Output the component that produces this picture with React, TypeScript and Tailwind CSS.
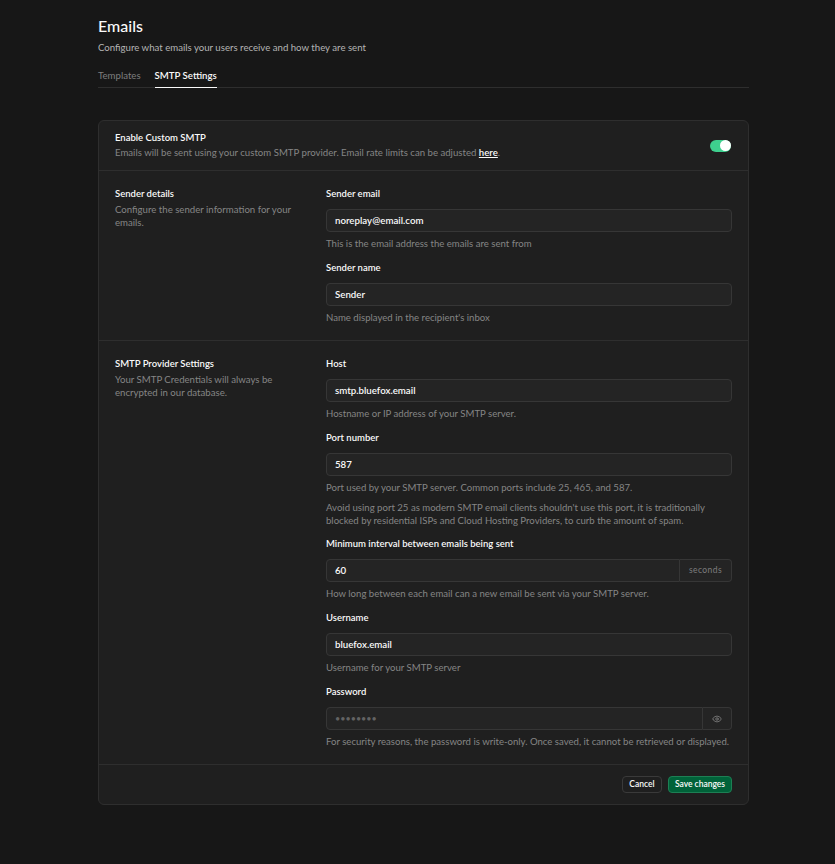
import { Eye } from "lucide-react";

function Field({ label, value, help, note, suffix, children }: { label: string; value?: string; help: string; note?: string; suffix?: React.ReactNode; children?: React.ReactNode }) {
  return (
    <div className="flex flex-col">
      <div className="h-[14px] text-[9.5px] leading-[14px] font-semibold text-[#fafafa]">{label}</div>
      <div className="mt-[8px] flex h-[23px] w-full">
        <div className={`flex min-w-0 flex-1 items-center border border-[#363636] bg-[#242424] px-[8px] text-[9.7px] font-semibold text-[#fafafa] ${suffix ? "rounded-l-[4px]" : "rounded-[4px]"}`}>
          {value}
          {children}
        </div>
        {suffix}
      </div>
      <p className="mt-[4.5px] text-[9.6px] leading-[14px] text-[#858585]">{help}</p>
      {note && <p className="mt-[6px] text-[9.6px] leading-[13px] text-[#858585]">{note}</p>}
    </div>
  );
}

export default function App() {
  return (
    <div className="min-h-[864px] bg-[#171717]" style={{ fontFamily: "Lato, 'Liberation Sans', sans-serif" }}>
      <div className="ml-[98px] w-[651px] pt-[16px] pb-[59px]">
        <h1 className="text-[16px] leading-[20px] font-medium text-[#fafafa]">Emails</h1>
        <p className="mt-[4px] text-[9.65px] leading-[14px] text-[#b4b4b4]">Configure what emails your users receive and how they are sent</p>
        <div className="mt-[14px] flex h-[20px] gap-[14px] border-b border-[#2e2e2e]">
          <div className="text-[9.65px] leading-[14px] text-[#7e7e7e]">Templates</div>
          <div className="h-[20px] border-b border-[#fafafa] text-[9.65px] leading-[14px] font-semibold text-[#fafafa]">SMTP Settings</div>
        </div>
        <div className="mt-[32px] rounded-[6px] border border-[#2e2e2e] bg-[#1f1f1f]">
          <div className="flex h-[50px] items-center justify-between border-b border-[#2e2e2e] pr-[17px] pl-[16px]">
            <div className="pb-[1px]">
              <div className="text-[9.5px] leading-[14px] font-semibold text-[#fafafa]">Enable Custom SMTP</div>
              <div className="text-[9.65px] leading-[14px] text-[#858585]">
                Emails will be sent using your custom SMTP provider. Email rate limits can be adjusted{" "}
                <span className="font-semibold text-[#fafafa] underline">here</span>.
              </div>
            </div>
            <div className="flex h-[12px] w-[21px] items-center justify-end rounded-full bg-[#3ecf8e]">
              <div className="h-[11px] w-[11px] rounded-full bg-white" />
            </div>
          </div>
          <div className="flex border-b border-[#2e2e2e] px-[16px] pt-[16px] pb-[15.5px]">
            <div className="w-[211px] shrink-0 pr-[30px]">
              <div className="text-[9.5px] leading-[14px] font-semibold text-[#fafafa]">Sender details</div>
              <p className="mt-[2px] text-[9.65px] leading-[13px] text-[#858585]">Configure the sender information for your emails.</p>
            </div>
            <div className="flex flex-1 flex-col gap-[10.5px]">
              <Field label="Sender email" value="noreplay@email.com" help="This is the email address the emails are sent from" />
              <Field label="Sender name" value="Sender" help="Name displayed in the recipient's inbox" />
            </div>
          </div>
          <div className="flex border-b border-[#2e2e2e] px-[16px] pt-[16px] pb-[15.5px]">
            <div className="w-[211px] shrink-0 pr-[30px]">
              <div className="text-[9.5px] leading-[14px] font-semibold text-[#fafafa]">SMTP Provider Settings</div>
              <p className="mt-[2px] text-[9.65px] leading-[13px] text-[#858585]">Your SMTP Credentials will always be encrypted in our database.</p>
            </div>
            <div className="flex flex-1 flex-col gap-[10.5px]">
              <Field label="Host" value="smtp.bluefox.email" help="Hostname or IP address of your SMTP server." />
              <Field
                label="Port number"
                value="587"
                help="Port used by your SMTP server. Common ports include 25, 465, and 587."
                note="Avoid using port 25 as modern SMTP email clients shouldn't use this port, it is traditionally blocked by residential ISPs and Cloud Hosting Providers, to curb the amount of spam."
              />
              <Field
                label="Minimum interval between emails being sent"
                value="60"
                help="How long between each email can a new email be sent via your SMTP server."
                suffix={
                  <div className="flex w-[52px] items-center justify-center rounded-r-[4px] border border-l-0 border-[#363636] bg-[#242424] text-[8.5px] tracking-[0.4px] text-[#7e7e7e]">seconds</div>
                }
              />
              <Field label="Username" value="bluefox.email" help="Username for your SMTP server" />
              <Field
                label="Password"
                help="For security reasons, the password is write-only. Once saved, it cannot be retrieved or displayed."
                suffix={
                  <div className="flex w-[29px] items-center justify-center rounded-r-[4px] border border-l-0 border-[#363636] bg-[#242424] text-[#7e7e7e]">
                    <Eye size={10} strokeWidth={2} />
                  </div>
                }
              >
                <span className="text-[9px] font-normal text-[#636363]">••••••••</span>
              </Field>
            </div>
          </div>
          <div className="flex h-[39px] items-center justify-end gap-[6px] pr-[16px]">
            <button className="flex h-[17px] w-[40px] items-center justify-center rounded-[4px] border border-[#3a3a3a] bg-[#1f1f1f] text-[8.5px] font-semibold text-[#fafafa]">Cancel</button>
            <button className="flex h-[17px] w-[64px] items-center justify-center rounded-[4px] border border-[#1d7f54] bg-[#006239] text-[8.5px] font-semibold text-[#fafafa]">Save changes</button>
          </div>
        </div>
      </div>
    </div>
  );
}
